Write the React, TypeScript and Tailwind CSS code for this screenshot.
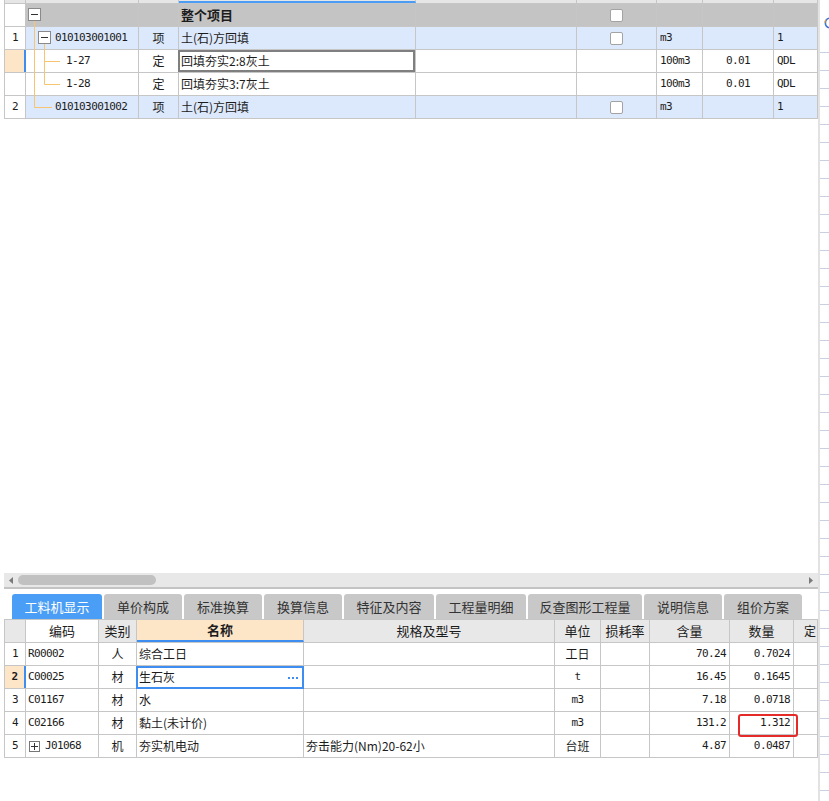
import React from 'react';

const line = 'border-[#c6c6c6]';
const cjk = "font-['Noto_Sans_CJK_SC',sans-serif] text-[12px]";
const mono = "font-['DejaVu_Sans_Mono','Noto_Sans_CJK_SC',monospace] text-[11px] tracking-[-0.6px]";

const topW = ['w-[113px]', 'w-[40px]', 'w-[237px]', 'w-[161px]', 'w-[80px]', 'w-[46px]', 'w-[71px]', 'w-[44px]'];
const botW = ['w-[73px]', 'w-[38px]', 'w-[167px]', 'w-[251px]', 'w-[46px]', 'w-[49px]', 'w-[80px]', 'w-[64px]', 'w-[24px]'];

function Check() {
  return <div className="w-[13px] h-[13px] bg-white border border-[#a3a3a3] rounded-[2px]" />;
}

const topRows = [
  { bg: 'bg-[#c4c4c4]', num: '', code: '', pad: '', type: '', name: '整个项目', bold: true, check: true, unit: '', qty: '', qdl: '' },
  { bg: 'bg-[#dce8fb]', num: '1', code: '010103001001', pad: 'pl-[29px]', type: '项', name: '土(石)方回填', check: true, unit: 'm3', qty: '', qdl: '1' },
  { bg: 'bg-white', num: '', code: '1-27', pad: 'pl-[40px]', type: '定', name: '回填夯实2:8灰土', unit: '100m3', qty: '0.01', qdl: 'QDL', active: true },
  { bg: 'bg-white', num: '', code: '1-28', pad: 'pl-[40px]', type: '定', name: '回填夯实3:7灰土', unit: '100m3', qty: '0.01', qdl: 'QDL' },
  { bg: 'bg-[#dce8fb]', num: '2', code: '010103001002', pad: 'pl-[29px]', type: '项', name: '土(石)方回填', check: true, unit: 'm3', qty: '', qdl: '1' },
];

function TopTable() {
  return (
    <div className={`ml-[4px] border-l ${line} text-[#1c1c1c]`}>
      {/* header row, scrolled nearly out of view */}
      <div className={`flex h-[4px] border-b ${line} bg-[#e6e6e6]`}>
        <div className={`w-[21px] shrink-0 border-r ${line}`} />
        {topW.map((w, i) => (
          <div key={i} className={`${w} shrink-0 border-r ${line} ${i === 2 ? 'border-b-2 border-b-[#4a9cf5]' : ''}`} />
        ))}
      </div>
      {topRows.map((r, i) => (
        <div key={i} className={`flex h-[23px] border-b ${line}`}>
          <div
            className={`w-[21px] shrink-0 flex items-center justify-center ${mono} ${
              r.active ? 'bg-[#fde6c8] border-r-2 border-r-[#3d8ef0]' : `bg-white border-r ${line}`
            }`}
          >
            {r.num}
          </div>
          <div className={`flex ${r.bg}`}>
            <div className={`${topW[0]} shrink-0 border-r ${line} flex items-center ${r.pad} ${mono}`}>{r.code}</div>
            <div className={`${topW[1]} shrink-0 border-r ${line} flex items-center justify-center ${cjk}`}>{r.type}</div>
            <div className={`${topW[2]} shrink-0 border-r ${line} relative flex items-center pl-[2px] whitespace-nowrap ${cjk} ${r.bold ? 'font-bold text-[13px]' : ''}`}>
              {r.name}
              {r.active && <div className="absolute -left-px top-0 w-[237px] h-[22px] border-2 border-[#7f7f7f]" />}
            </div>
            <div className={`${topW[3]} shrink-0 border-r ${line}`} />
            <div className={`${topW[4]} shrink-0 border-r ${line} flex items-center justify-center`}>{r.check && <Check />}</div>
            <div className={`${topW[5]} shrink-0 border-r ${line} flex items-center pl-[3px] ${mono}`}>{r.unit}</div>
            <div className={`${topW[6]} shrink-0 border-r ${line} flex items-center justify-center ${mono}`}>{r.qty}</div>
            <div className={`${topW[7]} shrink-0 border-r ${line} flex items-center pl-[3px] ${mono}`}>{r.qdl}</div>
          </div>
        </div>
      ))}
    </div>
  );
}

function TreeLines() {
  const o = '#f7c56f';
  return (
    <svg className="absolute left-0 top-0 pointer-events-none" width="140" height="120">
      <line x1="34.5" y1="21" x2="34.5" y2="107.5" stroke={o} />
      <line x1="34.5" y1="107.5" x2="52" y2="107.5" stroke={o} />
      <line x1="44.5" y1="44" x2="44.5" y2="84.5" stroke={o} />
      <line x1="44.5" y1="61.5" x2="60" y2="61.5" stroke={o} />
      <line x1="44.5" y1="84.5" x2="60" y2="84.5" stroke={o} />
      <rect x="28.5" y="8.5" width="12" height="12" fill="#fff" stroke="#8a8a8a" />
      <line x1="31" y1="14.5" x2="38" y2="14.5" stroke="#333" />
      <rect x="38.5" y="31.5" width="12" height="12" fill="#fff" stroke="#8a8a8a" />
      <line x1="41" y1="37.5" x2="48" y2="37.5" stroke="#333" />
    </svg>
  );
}

const tabs = [
  { label: '工料机显示', w: 'w-[90px]', on: true },
  { label: '单价构成', w: 'w-[78px]' },
  { label: '标准换算', w: 'w-[78px]' },
  { label: '换算信息', w: 'w-[78px]' },
  { label: '特征及内容', w: 'w-[90px]' },
  { label: '工程量明细', w: 'w-[90px]' },
  { label: '反查图形工程量', w: 'w-[114px]' },
  { label: '说明信息', w: 'w-[78px]' },
  { label: '组价方案', w: 'w-[78px]' },
];

const botRows = [
  { num: '1', code: 'R00002', type: '人', name: '综合工日', spec: '', unit: '工日', cjkUnit: true, amt: '70.24', qty: '0.7024' },
  { num: '2', code: 'C00025', type: '材', name: '生石灰', spec: '', unit: 't', amt: '16.45', qty: '0.1645', active: true },
  { num: '3', code: 'C01167', type: '材', name: '水', spec: '', unit: 'm3', amt: '7.18', qty: '0.0718' },
  { num: '4', code: 'C02166', type: '材', name: '黏土(未计价)', spec: '', unit: 'm3', amt: '131.2', qty: '1.312' },
  { num: '5', code: 'J01068', type: '机', name: '夯实机电动', spec: '夯击能力(Nm)20-62小', unit: '台班', cjkUnit: true, amt: '4.87', qty: '0.0487', plus: true },
];

function BottomTable() {
  const heads = ['编码', '类别', '名称', '规格及型号', '单位', '损耗率', '含量', '数量'];
  return (
    <div className={`relative ml-[4px] border-l ${line} text-[#1c1c1c]`}>
      <div className={`flex h-[24px] border-t border-b ${line} bg-[#e8e8e8] font-['Noto_Sans_CJK_SC',sans-serif] text-[13px]`}>
        <div className={`w-[21px] shrink-0 border-r ${line}`} />
        {heads.map((h, i) => (
          <div
            key={h}
            className={`${botW[i]} shrink-0 border-r ${line} flex items-center justify-center ${
              i === 0 ? 'bg-white' : ''
            } ${i === 2 ? 'bg-[#fde6c8] font-bold border-b-2 border-b-[#3d8ef0]' : ''}`}
          >
            {h}
          </div>
        ))}
        <div className={`${botW[8]} shrink-0 border-r ${line} flex items-center pl-[10px] text-[12px] whitespace-nowrap`}>定</div>
      </div>
      {botRows.map((r) => (
        <div key={r.num} className={`flex h-[23px] border-b ${line} bg-white`}>
          <div
            className={`w-[21px] shrink-0 flex items-center justify-center ${mono} ${
              r.active ? 'bg-[#fde6c8] border-r-2 border-r-[#3d8ef0] font-bold' : `border-r ${line}`
            }`}
          >
            {r.num}
          </div>
          <div className={`${botW[0]} shrink-0 border-r ${line} flex items-center ${r.plus ? 'pl-[3px]' : 'pl-[2px]'} ${mono}`}>
            {r.plus && (
              <span className="w-[11px] h-[11px] border border-[#777] bg-white flex items-center justify-center mr-[5px]">
                <svg width="9" height="9" viewBox="0 0 9 9">
                  <path d="M1 4.5h7M4.5 1v7" stroke="#333" strokeWidth="1" />
                </svg>
              </span>
            )}
            {r.code}
          </div>
          <div className={`${botW[1]} shrink-0 border-r ${line} flex items-center justify-center ${cjk}`}>{r.type}</div>
          <div className={`${botW[2]} shrink-0 border-r ${line} relative flex items-center pl-[2px] whitespace-nowrap ${cjk}`}>
            {r.name}
            {r.active && (
              <div className="absolute -left-px top-0 w-[168px] h-[23px] border-2 border-[#3d8ef0] flex items-center justify-end gap-[2px] pr-[4px]">
                <span className="w-[2px] h-[2px] bg-[#3d8ef0]" />
                <span className="w-[2px] h-[2px] bg-[#3d8ef0]" />
                <span className="w-[2px] h-[2px] bg-[#3d8ef0]" />
              </div>
            )}
          </div>
          <div className={`${botW[3]} shrink-0 border-r ${line} flex items-center pl-[2px] whitespace-nowrap ${cjk}`}>{r.spec}</div>
          <div className={`${botW[4]} shrink-0 border-r ${line} flex items-center justify-center ${r.cjkUnit ? cjk : mono}`}>{r.unit}</div>
          <div className={`${botW[5]} shrink-0 border-r ${line}`} />
          <div className={`${botW[6]} shrink-0 border-r ${line} flex items-center justify-end pr-[3px] ${mono}`}>{r.amt}</div>
          <div className={`${botW[7]} shrink-0 border-r ${line} flex items-center justify-end pr-[3px] ${mono}`}>{r.qty}</div>
          <div className={`${botW[8]} shrink-0 border-r ${line}`} />
        </div>
      ))}
      <div className="absolute left-[733px] top-[95px] w-[60px] h-[23px] border-2 border-[#e52a2a] rounded-[3px]" />
    </div>
  );
}

export default function App() {
  return (
    <div className="flex w-[829px] h-[801px] bg-white overflow-hidden">
      <div className="w-[818px] shrink-0 flex flex-col">
        <div className="h-[573px] shrink-0 relative">
          <TopTable />
          <TreeLines />
        </div>

        {/* horizontal scrollbar */}
        <div className="h-[14px] shrink-0 ml-[4px] bg-[#e8e8e8] flex items-center pl-[5px] pr-[5px]">
          <svg width="4" height="7" viewBox="0 0 4 7">
            <path d="M4 0L0 3.5L4 7Z" fill="#7a7a7a" />
          </svg>
          <div className="ml-[5px] w-[138px] h-[10px] rounded-full bg-[#c1c1c1]" />
          <div className="flex-1" />
          <svg width="4" height="7" viewBox="0 0 4 7">
            <path d="M0 0L4 3.5L0 7Z" fill="#7a7a7a" />
          </svg>
        </div>
        <div className="h-[2px] shrink-0 ml-[4px] bg-[#c4c4c4]" />
        <div className="h-[5px] shrink-0" />

        {/* tabs */}
        <div className="h-[25px] shrink-0 flex gap-[2px] pl-[12px]">
          {tabs.map((t) => (
            <div
              key={t.label}
              className={`${t.w} shrink-0 rounded-t-[3px] flex items-center justify-center font-['Noto_Sans_CJK_SC',sans-serif] text-[13px] ${
                t.on ? 'bg-[#4a9ef5] text-white' : 'bg-[#c8c8c8] text-[#333]'
              }`}
            >
              {t.label}
            </div>
          ))}
        </div>

        <BottomTable />
      </div>

      <div className="w-[2px] shrink-0 bg-[#e2e2e2]" />
      <div className="flex-1 flex flex-col overflow-hidden">
        <div className="h-[35px] shrink-0 relative">
          <svg className="absolute left-[2px] top-[17px]" width="8" height="12" viewBox="0 0 8 12">
            <path d="M7 1.2A5 5 0 0 0 7 10.8" fill="none" stroke="#3a78d4" strokeWidth="1.6" />
            <path d="M4 2.5A4 4 0 0 0 3 6" fill="none" stroke="#f0a030" strokeWidth="1" />
          </svg>
        </div>
        {Array.from({ length: 43 }).map((_, i) => (
          <div key={i} className="h-[18px] shrink-0 border-b border-[#c9d0e2]" />
        ))}
      </div>
    </div>
  );
}
